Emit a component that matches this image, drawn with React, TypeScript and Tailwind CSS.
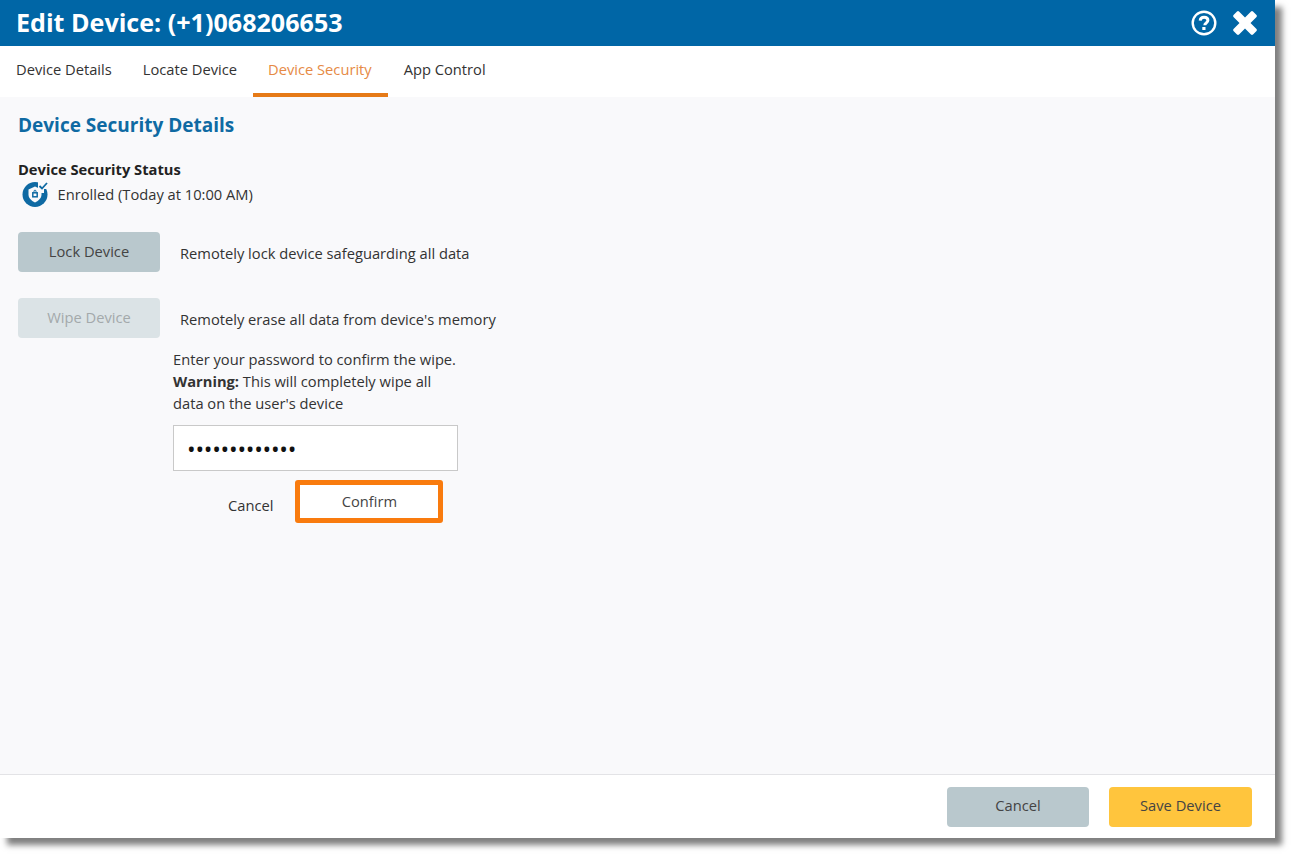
import { FC } from 'react';

const tabs = ['Device Details', 'Locate Device', 'Device Security', 'App Control'];

const HelpIcon: FC = () => (
  <svg width="26" height="26" viewBox="0 0 26 26" fill="none">
    <circle cx="13" cy="13" r="11.3" stroke="#fff" strokeWidth="2.4" />
    <path
      d="M9.2 10.600c.2-2.100 1.800-3.300 3.900-3.300 2.200 0 3.800 1.200 3.800 3 0 1.500-.9 2.200-1.900 2.900-.9.600-1.200 1-1.200 2"
      stroke="#fff"
      strokeWidth="3"
      fill="none"
    />
    <rect x="11.300" y="17" width="3.200" height="3" fill="#fff" />
  </svg>
);

const CloseIcon: FC = () => (
  <svg width="26" height="26" viewBox="0 0 26 26">
    <path
      d="M7 1.500 13 7.500 19 1.500a1.500 1.500 0 0 1 2 0l3.500 3.500a1.500 1.500 0 0 1 0 2L18.500 13l6 6a1.500 1.500 0 0 1 0 2L21 24.500a1.500 1.500 0 0 1-2 0l-6-6-6 6a1.500 1.500 0 0 1-2 0L1.500 21a1.500 1.500 0 0 1 0-2l6-6-6-6a1.500 1.500 0 0 1 0-2L5 1.500a1.500 1.500 0 0 1 2 0Z"
      fill="#fff"
    />
  </svg>
);

const SecurityIcon: FC = () => (
  <svg width="28" height="28" viewBox="0 0 28 28">
    <circle cx="14" cy="14.500" r="12.500" fill="#0f6aa3" />
    <path d="M17 0h11v9h-5v4h-6Z" fill="#f9f9fb" />
    <path d="M14 6.500 20.500 9.500v5c0 3.500-2.600 6-6.500 8-3.900-2-6.500-4.500-6.500-8v-5Z" fill="#f9f9fb" />
    <rect x="11.800" y="12.800" width="4.400" height="4" fill="none" stroke="#0f6aa3" strokeWidth="1.500" />
    <path d="M13 12.500v-1.300a1 1 0 0 1 2 0v1.300" fill="none" stroke="#0f6aa3" strokeWidth="1" />
    <path d="m18.500 6 2.500 2.500 5-5.500" fill="none" stroke="#0f6aa3" strokeWidth="1.800" />
  </svg>
);

const App: FC = () => {
  return (
    <div className="w-[1293px] h-[856px] overflow-hidden bg-white font-['Open_Sans',sans-serif] text-[14.7px] text-[#333]">
      <div className="flex flex-col w-[1275px] h-[838px] bg-white shadow-[7px_7px_6px_rgba(0,0,0,0.5)]">
        <header className="flex items-center justify-between h-[46px] pl-4 pr-[17px] bg-[#0066a6]">
          <h1 className="text-[25.100px] font-bold text-white">Edit Device: (+1)068206653</h1>
          <div className="flex items-center gap-[15px]">
            <HelpIcon />
            <CloseIcon />
          </div>
        </header>

        <nav className="flex h-[51px] pl-[0.5px] bg-white">
          {tabs.map((tab) =>
            tab === 'Device Security' ? (
              <div
                key={tab}
                className="flex items-center h-full pl-[15.500px] pr-[16.500px] pb-[1px] border-b-4 border-[#e67a17] text-[#e68a45]">
                {tab}
              </div>
            ) : (
              <div key={tab} className="flex items-center h-full px-[15.500px] pb-[5px] text-[#333]">
                {tab}
              </div>
            )
          )}
        </nav>

        <main className="flex-1 flex flex-col bg-[#f9f9fb] pl-[18px] pt-[15px]">
          <h2 className="text-[19px] leading-[26px] font-bold text-[#0f6aa3]">
            Device Security Details
          </h2>
          <div className="mt-[21px] font-bold leading-[20px] text-[#222]">Device Security Status</div>
          <div className="flex items-center gap-[8.500px] h-[28px] pl-[3px] mt-[1px]">
            <SecurityIcon />
            <span>Enrolled (Today at 10:00 AM)</span>
          </div>

          <div className="flex items-center mt-[24px]">
            <button className="w-[142px] h-[40px] pb-[2px] rounded bg-[#b9c8cd] text-[#444]">Lock Device</button>
            <span className="ml-[20px] pt-[2px]">Remotely lock device safeguarding all data</span>
          </div>
          <div className="flex items-center mt-[26px]">
            <button className="w-[142px] h-[40px] pb-[2px] rounded bg-[#dbe3e6] text-[#a3a9ab]">Wipe Device</button>
            <span className="ml-[20px] pt-[2px]">Remotely erase all data from device's memory</span>
          </div>

          <div className="flex flex-col w-[285px] ml-[155px] mt-[10px]">
            <p className="leading-[22px]">
              Enter your password to confirm the wipe.
              <br />
              <b className="font-bold">Warning:</b> This will completely wipe all
              <br />
              data on the user's device
            </p>
            <div className="flex items-center h-[46px] mt-[11px] pl-[13px] pt-[2px] bg-white border border-[#c9c9c9] text-[#111] text-[23px] tracking-[-0.25px] leading-none">
              •••••••••••••
            </div>
            <div className="flex items-start mt-[9px]">
              <span className="ml-[55px] mt-[14px]">Cancel</span>
              <button className="w-[148px] h-[43px] ml-[22px] rounded-[3px] bg-white border-[5px] border-[#f97b0e] text-[#444]">
                Confirm
              </button>
            </div>
          </div>
        </main>

        <footer className="flex items-center justify-end gap-5 h-[64px] pr-[23px] bg-white border-t border-[#e3e3e6]">
          <button className="w-[142px] h-[40px] pb-[2px] rounded bg-[#b9c8cd] text-[#444]">Cancel</button>
          <button className="w-[143px] h-[40px] pb-[2px] rounded bg-[#ffc53d] text-[#444]">Save Device</button>
        </footer>
      </div>
    </div>
  );
};

export default App;
